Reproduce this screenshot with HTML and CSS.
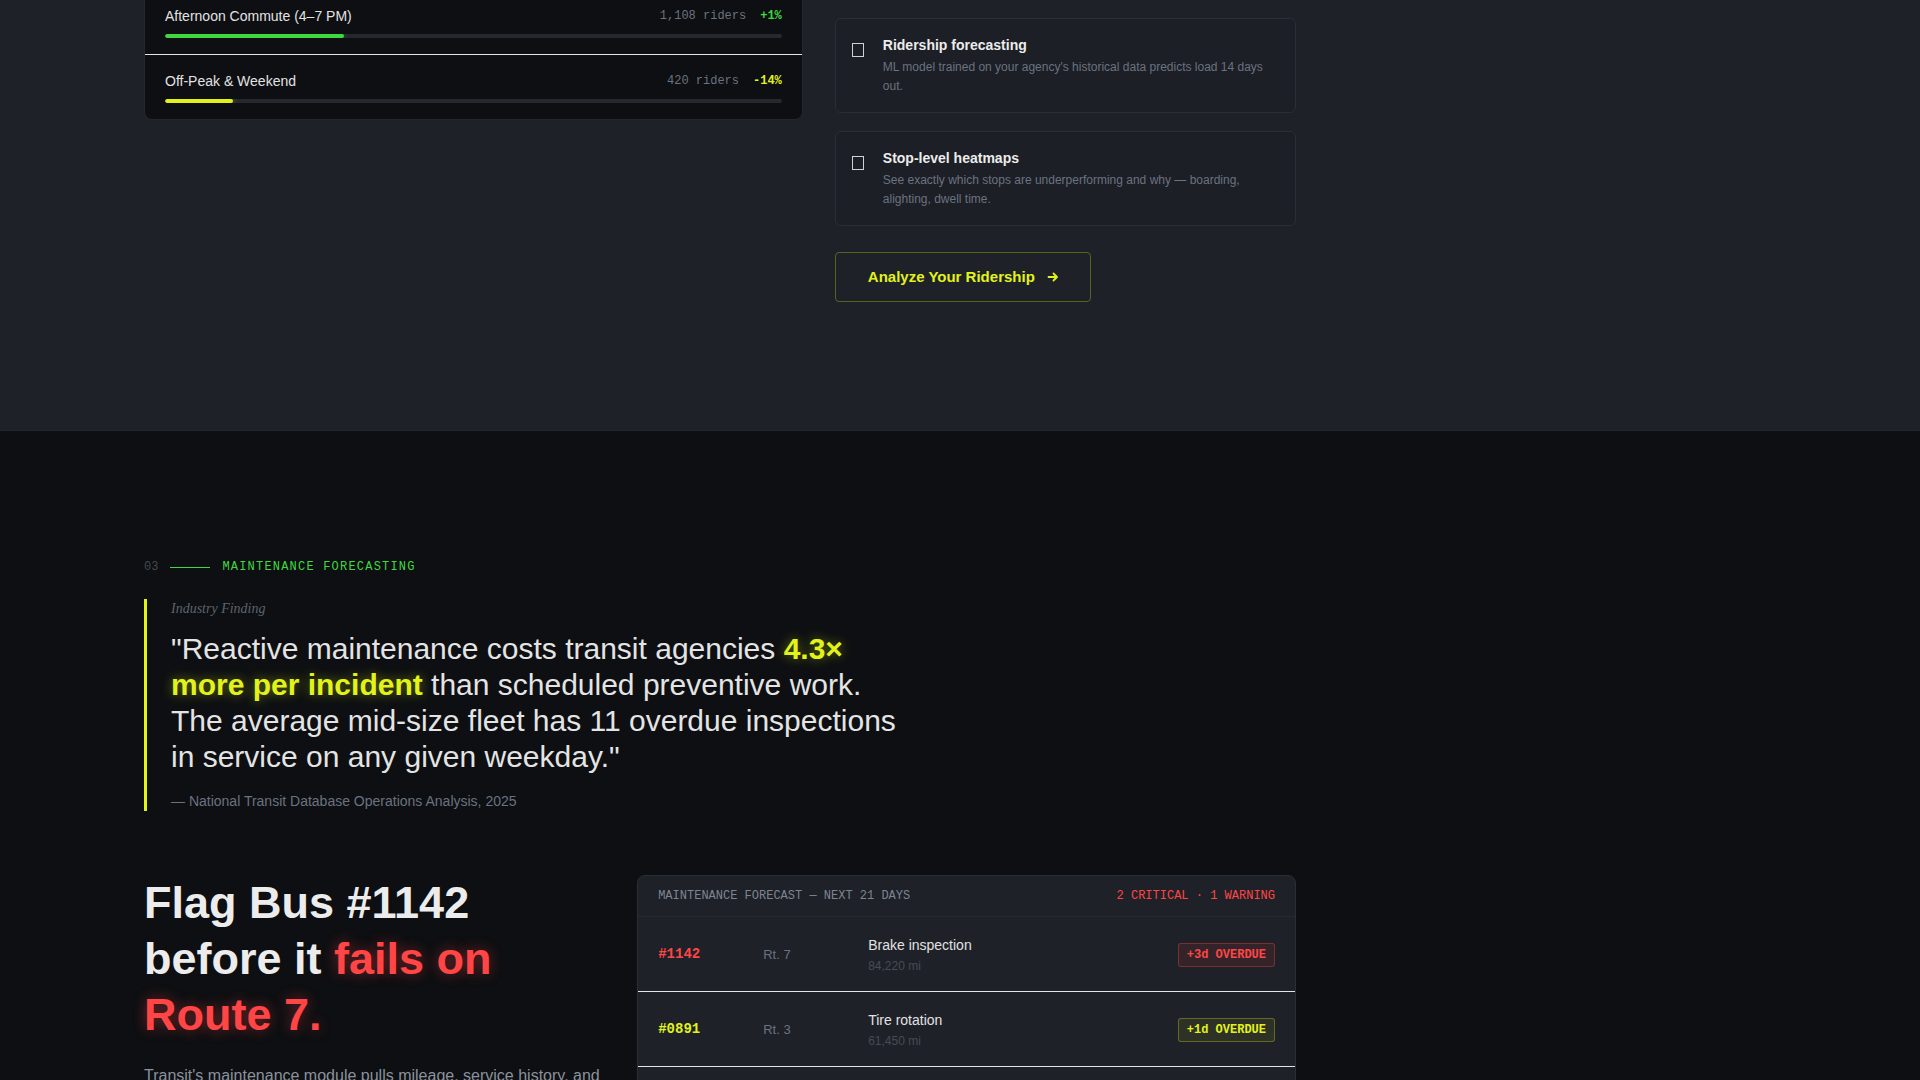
FILE: index.html
```html
<!DOCTYPE html>
<html lang="en">
<head>
    <meta charset="UTF-8" />
    <meta name="viewport" content="width=device-width, initial-scale=1.0"/>
    <title>Transit — Ridership &amp; Maintenance</title>
    <link rel="stylesheet" href="styles.css">
</head>
<body>
    <!-- 
        02 Ridership analytics
        Left: load by time band, right: feature list + CTA
    -->
    <section class="ridership">
        <div class="container">
            <div class="ridership-grid">
                <div class="load-card">
                    <div class="load-row">
                        <div class="load-head">
                            <span class="load-name">Morning Commute (6–9 AM)</span>
                            <span class="load-stats"><span class="riders">1,342 riders</span><span class="delta up">+6%</span></span>
                        </div>
                        <div class="bar"><div class="bar-fill green" style="width: 36%"></div></div>
                    </div>
                    <div class="load-row">
                        <div class="load-head">
                            <span class="load-name">Afternoon Commute (4–7 PM)</span>
                            <span class="load-stats"><span class="riders">1,108 riders</span><span class="delta up">+1%</span></span>
                        </div>
                        <div class="bar"><div class="bar-fill green" style="width: 29%"></div></div>
                    </div>
                    <div class="load-row">
                        <div class="load-head">
                            <span class="load-name">Off-Peak &amp; Weekend</span>
                            <span class="load-stats"><span class="riders">420 riders</span><span class="delta down">-14%</span></span>
                        </div>
                        <div class="bar"><div class="bar-fill yellow" style="width: 11%"></div></div>
                    </div>
                </div>

                <div class="ridership-side">
                    <div class="feature-list">
                        <div class="feature">
                            <span class="feature-icon"></span>
                            <div>
                                <h3>Live load alerts</h3>
                                <p>Get notified the moment a trip crosses 85% capacity.</p>
                            </div>
                        </div>
                        <div class="feature">
                            <span class="feature-icon"></span>
                            <div>
                                <h3>Ridership forecasting</h3>
                                <p>ML model trained on your agency's historical data predicts load 14 days out.</p>
                            </div>
                        </div>
                        <div class="feature">
                            <span class="feature-icon"></span>
                            <div>
                                <h3>Stop-level heatmaps</h3>
                                <p>See exactly which stops are underperforming and why — boarding, alighting, dwell time.</p>
                            </div>
                        </div>
                    </div>
                    <a href="#" class="btn-outline">
                        Analyze Your Ridership
                        <svg width="12" height="12" viewBox="0 0 12 12" fill="none" stroke="currentColor" stroke-width="1.8" stroke-linecap="round" stroke-linejoin="round"><path d="M1.5 6h8.5M6.5 2.5 10 6l-3.5 3.5"/></svg>
                    </a>
                </div>
            </div>
        </div>
    </section>

    <!-- 03 Maintenance forecasting -->
    <section class="maintenance">
        <div class="container">
            <div class="section-label">
                <span class="label-num">03</span>
                <span class="label-line"></span>
                <span class="label-text">MAINTENANCE FORECASTING</span>
            </div>

            <blockquote class="finding">
                <div class="finding-kicker">Industry Finding</div>
                <p class="finding-text">"Reactive maintenance costs transit agencies <strong>4.3× more per incident</strong> than scheduled preventive work. The average mid-size fleet has 11 overdue inspections in service on any given weekday."</p>
                <cite>— National Transit Database Operations Analysis, 2025</cite>
            </blockquote>

            <div class="maint-grid">
                <div class="maint-copy">
                    <h2>Flag Bus #1142 before it <span class="danger">fails on Route 7.</span></h2>
                    <p>Transit's maintenance module pulls mileage, service history, and fault codes from every vehicle to predict which buses will need work — and where — weeks before they break down.</p>
                </div>

                <div class="forecast-panel">
                    <div class="forecast-head">
                        <span>MAINTENANCE FORECAST — NEXT 21 DAYS</span>
                        <span class="forecast-alert">2 CRITICAL · 1 WARNING</span>
                    </div>
                    <div class="forecast-row">
                        <span class="bus-id critical">#1142</span>
                        <span class="route">Rt. 7</span>
                        <div class="task">
                            <div class="task-name">Brake inspection</div>
                            <div class="task-miles">84,220 mi</div>
                        </div>
                        <span class="badge critical">+3d OVERDUE</span>
                    </div>
                    <div class="forecast-row">
                        <span class="bus-id warning">#0891</span>
                        <span class="route">Rt. 3</span>
                        <div class="task">
                            <div class="task-name">Tire rotation</div>
                            <div class="task-miles">61,450 mi</div>
                        </div>
                        <span class="badge warning">+1d OVERDUE</span>
                    </div>
                    <div class="forecast-row">
                        <span class="bus-id critical">#2207</span>
                        <span class="route">Rt. 12</span>
                        <div class="task">
                            <div class="task-name">Transmission service</div>
                            <div class="task-miles">112,780 mi</div>
                        </div>
                        <span class="badge critical">DUE TODAY</span>
                    </div>
                    <div class="forecast-row">
                        <span class="bus-id">#1630</span>
                        <span class="route">Rt. 9</span>
                        <div class="task">
                            <div class="task-name">Oil &amp; filter change</div>
                            <div class="task-miles">47,310 mi</div>
                        </div>
                        <span class="badge">IN 6 DAYS</span>
                    </div>
                </div>
            </div>
        </div>
    </section>
</body>
</html>
```

FILE: styles.css
```css
/* 
    Basic reset + palette
*/
* {
    box-sizing: border-box;
    margin: 0;
    padding: 0;
}

:root {
    --bg-dark: #0d0f12;
    --bg-mid: #1e2128;
    --line: #2a2e35;
    --text: #e6e6e6;
    --muted: #6b7280;
    --green: #3fd83f;
    --yellow: #e2f31a;
    --red: #ff4545;
    --mono: "Liberation Mono", "DejaVu Sans Mono", monospace;
}

body {
    font-family: "Liberation Sans", Arial, sans-serif;
    color: var(--text);
    background: var(--bg-dark);
    line-height: 1.5;
}

.container {
    padding: 0 144px;
}

.ridership {
    background: var(--bg-mid);
    padding-bottom: 128px;
}

.ridership-grid {
    max-width: 1152px;
    display: grid;
    grid-template-columns: 10fr 7fr;
    gap: 32px;
    align-items: start;
    margin-top: -76px;
}

.load-card {
    background: var(--bg-dark);
    border: 1px solid #23262d;
    border-radius: 8px;
}

.load-row {
    padding: 16px 20px;
}

.load-row:not(:last-child) {
    border-bottom: 1px solid #e4e4e4;
}

.load-head {
    display: flex;
    justify-content: space-between;
    align-items: center;
    height: 20px;
    margin-bottom: 8px;
}

.load-name {
    font-size: 14px;
    color: #e2e2e2;
}

.load-stats {
    display: flex;
    gap: 14px;
    font-family: var(--mono);
    font-size: 12px;
}

.riders {
    color: var(--muted);
}

.delta {
    font-weight: bold;
}

.delta.up {
    color: var(--green);
}

.delta.down {
    color: var(--yellow);
}

.bar {
    height: 4px;
    border-radius: 2px;
    background: #25282e;
    overflow: hidden;
}

.bar-fill {
    height: 100%;
    border-radius: 2px;
}

.bar-fill.green {
    background: var(--green);
    box-shadow: 0 0 6px rgba(63, 216, 63, 0.5);
}

.bar-fill.yellow {
    background: var(--yellow);
    box-shadow: 0 0 6px rgba(226, 243, 26, 0.5);
}

.feature-list {
    display: flex;
    flex-direction: column;
    gap: 18px;
}

.feature {
    display: flex;
    gap: 19px;
    padding: 16px;
    border: 1px solid #2a2e36;
    border-radius: 6px;
    background: rgba(0, 0, 0, 0.06);
}

/* Icon slot (glyph box) */
.feature-icon {
    flex: none;
    width: 12px;
    height: 14px;
    margin-top: 8px;
    border: 1.5px solid #cfd2d6;
}

.feature h3 {
    font-size: 14px;
    line-height: 20px;
    color: #ececec;
    margin-bottom: 3px;
}

.feature p {
    font-size: 12px;
    line-height: 19px;
    color: var(--muted);
}

.btn-outline {
    display: inline-flex;
    align-items: center;
    gap: 12px;
    height: 50px;
    margin-top: 26px;
    padding: 0 31px 0 32px;
    border: 1px solid #56641e;
    border-radius: 4px;
    font-size: 15px;
    font-weight: bold;
    color: var(--yellow);
    text-decoration: none;
}

/* 
    Maintenance section
*/
.maintenance {
    background: var(--bg-dark);
    border-top: 1px solid #22252b;
    padding: 128px 0 96px;
}

.section-label {
    display: flex;
    align-items: center;
    gap: 12px;
    height: 16px;
    margin-bottom: 24px;
    font-family: var(--mono);
    font-size: 12px;
}

.label-num {
    color: #454a52;
}

.label-line {
    width: 40px;
    height: 1px;
    background: var(--green);
}

.label-text {
    color: var(--green);
    letter-spacing: 0.1em;
}

.finding {
    max-width: 760px;
    border-left: 3px solid var(--yellow);
    padding-left: 24px;
}

.finding-kicker {
    font-family: "Liberation Serif", "DejaVu Serif", serif;
    font-style: italic;
    font-size: 14px;
    line-height: 20px;
    color: #5c636e;
    margin-bottom: 12px;
}

.finding-text {
    font-size: 30px;
    line-height: 36px;
    color: #e4e4e4;
}

.finding-text strong {
    color: var(--yellow);
    text-shadow: 0 0 12px rgba(226, 243, 26, 0.45);
}

.finding cite {
    display: block;
    margin-top: 16px;
    font-size: 14px;
    line-height: 20px;
    font-style: normal;
    color: var(--muted);
}

.maint-grid {
    max-width: 1152px;
    display: grid;
    grid-template-columns: 7fr 10fr;
    gap: 32px;
    align-items: start;
    margin-top: 64px;
}

.maint-copy h2 {
    font-size: 45px;
    line-height: 56px;
    font-weight: bold;
    color: #ececec;
}

.maint-copy .danger {
    color: var(--red);
    text-shadow: 0 0 14px rgba(255, 69, 69, 0.45);
}

.maint-copy p {
    margin-top: 20px;
    font-size: 16px;
    line-height: 26px;
    color: #8b929c;
}

.forecast-panel {
    background: var(--bg-mid);
    border: 1px solid var(--line);
    border-radius: 8px;
    overflow: hidden;
}

.forecast-head {
    display: flex;
    justify-content: space-between;
    padding: 13px 20px;
    border-bottom: 1px solid #262a31;
    font-family: var(--mono);
    font-size: 12px;
    line-height: 14px;
    color: #7d8590;
}

.forecast-alert {
    color: var(--red);
}

.forecast-row {
    display: grid;
    grid-template-columns: 105px 105px 1fr auto;
    align-items: center;
    padding: 18px 20px 17px;
    border-bottom: 1px solid #e4e4e4;
}

.bus-id {
    font-family: var(--mono);
    font-size: 14px;
    font-weight: bold;
    color: #9aa0a8;
}

.bus-id.critical {
    color: var(--red);
}

.bus-id.warning {
    color: var(--yellow);
}

.route {
    font-size: 13px;
    color: var(--muted);
}

.task-name {
    font-size: 14px;
    line-height: 20px;
    color: #e2e2e2;
    margin-bottom: 3px;
}

.task-miles {
    font-size: 12px;
    line-height: 16px;
    color: #464c55;
}

.badge {
    padding: 3px 8px;
    border: 1px solid var(--line);
    border-radius: 3px;
    font-family: var(--mono);
    font-size: 12px;
    line-height: 16px;
    font-weight: bold;
    color: #9aa0a8;
}

.badge.critical {
    color: var(--red);
    background: rgba(255, 69, 69, 0.1);
    border-color: rgba(255, 69, 69, 0.35);
}

.badge.warning {
    color: var(--yellow);
    background: rgba(226, 243, 26, 0.08);
    border-color: rgba(226, 243, 26, 0.3);
}
```
